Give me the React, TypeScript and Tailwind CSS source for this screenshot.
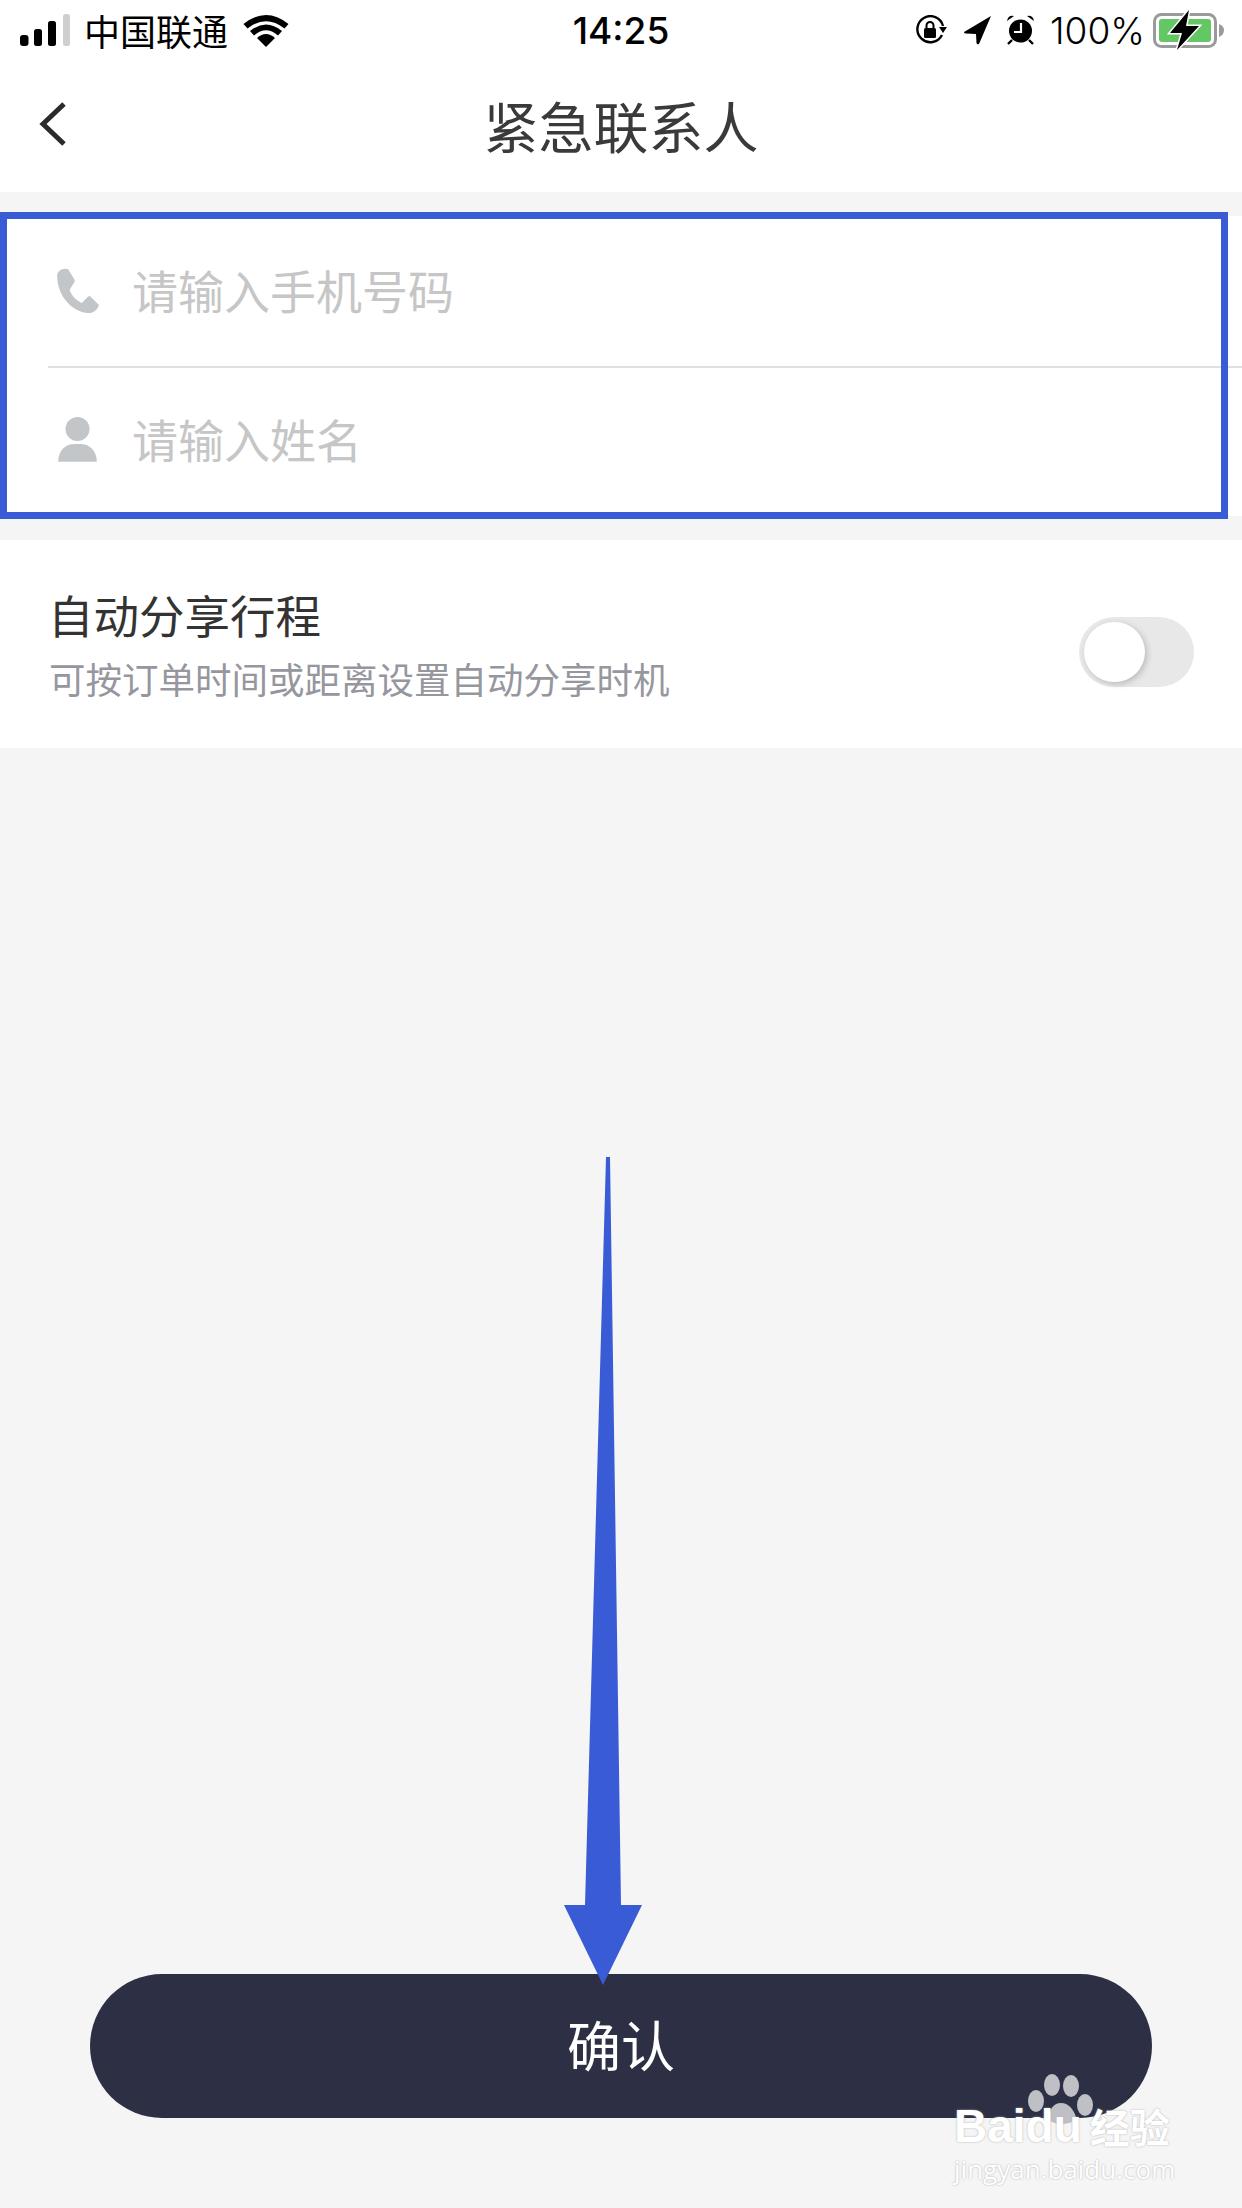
function StatusBar() {
  return (
    <div className="grid h-[60px] grid-cols-3 items-center text-black">
      <div className="flex items-center pl-5">
        <svg width="50" height="32" viewBox="0 0 50 32">
          <rect x="0" y="21" width="8.5" height="11" rx="3" fill="#000" />
          <rect x="14" y="15" width="8" height="17" rx="2.5" fill="#000" />
          <rect x="28" y="7" width="8" height="25" rx="2.5" fill="#000" />
          <rect x="43" y="0" width="7" height="32" rx="2.5" fill="#cfcfcf" />
        </svg>
        <span className="ml-[14px] font-['Noto_Sans_CJK_SC',sans-serif] text-[36px] leading-[44px] whitespace-nowrap">
          中国联通
        </span>
        <svg className="ml-[15px]" width="46" height="33" viewBox="0 0 46 33">
          <path d="M0.5 10 Q23 -8 45.5 10 L41.5 14.5 Q23 0 4.5 14.5 Z" fill="#000" />
          <path d="M7 17 Q23 4 39 17 L35 21.5 Q23 11 11 21.5 Z" fill="#000" />
          <path d="M14 24 Q23 16 32 24 L23 33 Z" fill="#000" />
        </svg>
      </div>

      <div className="pt-[2px] text-center font-['Inter',sans-serif] text-[37px] font-medium leading-[44px]">14:25</div>

      <div className="flex items-center justify-end pr-[16px]">
        <svg width="32" height="30" viewBox="0 0 32 30">
          <path d="M27 20 A13 13 0 1 1 28 11" fill="none" stroke="#000" strokeWidth="2.4" />
          <path d="M24 12 L32 12 L28 18 Z" fill="#000" />
          <rect x="9" y="13" width="12" height="10" rx="1.5" fill="#000" />
          <path d="M11.5 13 V10.5 A3.5 3.5 0 0 1 18.5 10.5 V13" fill="none" stroke="#000" strokeWidth="2" />
        </svg>
        <svg className="ml-[17px]" width="27" height="29" viewBox="0 0 27 29">
          <path d="M27 0 L0 16 Q0 17.5 2 17.5 L12 18 L12.5 27 Q13 29 15 28 Z" fill="#000" />
        </svg>
        <svg className="ml-[15px]" width="29" height="30" viewBox="0 0 29 30">
          <circle cx="14.5" cy="16" r="11.5" fill="#000" />
          <path d="M1 6 Q2 0 8 1 Z M28 6 Q27 0 21 1 Z" fill="#000" />
          <path d="M6 25 L2 29 M23 25 L27 29" stroke="#000" strokeWidth="2.4" />
          <path d="M15 8 V17 H8" fill="none" stroke="#fff" strokeWidth="2.2" />
        </svg>
        <span className="ml-[15px] pt-[2px] font-['Inter',sans-serif] text-[37px] font-light leading-[44px]">100%</span>
        <svg className="ml-[8px]" width="73" height="40" viewBox="0 0 73 40">
          <rect x="1.5" y="4.5" width="61" height="32" rx="7" fill="none" stroke="#9a9a9a" strokeWidth="3" />
          <rect x="6" y="9" width="52" height="23" rx="3" fill="#63c764" />
          <path d="M66 14 Q71 16 71 20 Q71 25 66 27 Z" fill="#9a9a9a" />
          <path d="M36 0 L17 23 H29 L24 40 L46 16 H33 Z" fill="#000" stroke="#fff" strokeWidth="3" paintOrder="stroke" />
        </svg>
      </div>
    </div>
  );
}

function Header() {
  return (
    <div className="relative flex h-[132px] items-center justify-center">
      <svg className="absolute left-[38px] top-[40px]" width="30" height="48" viewBox="0 0 30 48">
        <path d="M26 4 L5 24 L26 44" fill="none" stroke="#2b2b2b" strokeWidth="5" />
      </svg>
      <h1 className="mb-[5px] font-['Noto_Sans_CJK_SC',sans-serif] text-[55px] font-normal leading-[64px] text-[#3a3a3a]">
        紧急联系人
      </h1>
    </div>
  );
}

function PhoneIcon() {
  return (
    <svg width="43" height="46" viewBox="172 238 128 138">
      <path
        d="M172 262 C172 245 190 236 205 242 L225 275 C226 282 210 298 210 305 C215 322 230 335 245 343 C252 340 262 322 270 322 L297 348 C298 358 280 375 265 373 C215 370 172 320 172 262 Z"
        fill="#c3c6c9"
      />
    </svg>
  );
}

function PersonIcon() {
  return (
    <svg className="ml-[1px]" width="39" height="45" viewBox="176 681 116 135">
      <circle cx="234" cy="717" r="36" fill="#c3c6c9" />
      <path d="M176 815 C176 785 195 762 225 762 L243 762 C272 762 292 785 292 815 Z" fill="#c3c6c9" />
    </svg>
  );
}

function InputRow({ icon, placeholder, rowClass, textClass }: { icon: React.ReactNode; placeholder: string; rowClass: string; textClass?: string }) {
  return (
    <div className={`flex items-center pl-[57px] ${rowClass}`}>
      <div className="w-[75px] shrink-0">{icon}</div>
      <span className={`text-[46px] leading-[56px] text-[#c6c6c6] ${textClass ?? ""}`}>{placeholder}</span>
    </div>
  );
}

function Watermark() {
  return (
    <div className="absolute left-[954px] top-[2074px] w-[230px] text-white">
      <svg className="ml-[74px] block" width="66" height="52" viewBox="0 0 66 52">
        <ellipse cx="8" cy="27" rx="8" ry="11" fill="#bfc0c6" />
        <ellipse cx="24" cy="11" rx="8" ry="11" fill="#bfc0c6" />
        <ellipse cx="43" cy="12" rx="8" ry="11" fill="#bfc0c6" />
        <ellipse cx="57" cy="31" rx="8" ry="11" fill="#bfc0c6" />
        <path d="M20 46 Q22 29 33 29 Q44 29 49 46 Q33 54 20 46 Z" fill="#bfc0c6" />
      </svg>
      <div className="-mt-[19px] flex items-center font-['Liberation_Sans',sans-serif] text-[46px] font-bold leading-[38px] [text-shadow:0_0_2px_#aaaaaa]">
        <span>Baidu</span>
        <span className="ml-[8px] font-['Noto_Sans_CJK_SC',sans-serif] text-[40px] font-bold">经验</span>
      </div>
      <div className="mt-[8px] font-['Open_Sans',sans-serif] text-[26px] leading-[32px] whitespace-nowrap [text-shadow:0_0_2px_#aaaaaa]">
        jingyan.baidu.com
      </div>
    </div>
  );
}

export default function App() {
  return (
    <div className="relative flex h-[2208px] w-[1242px] flex-col overflow-hidden bg-[#f5f5f5] font-['Noto_Sans_CJK_SC',sans-serif]">
      <div className="bg-white">
        <StatusBar />
        <Header />
      </div>

      <div className="relative mt-6 bg-white">
        <InputRow icon={<PhoneIcon />} placeholder="请输入手机号码" rowClass="h-[150px]" textClass="mb-[4px]" />
        <div className="ml-[48px] h-[2px] bg-[#e0e0e0]" />
        <InputRow icon={<PersonIcon />} placeholder="请输入姓名" rowClass="h-[148px] pb-[5px]" textClass="mb-[4px]" />
        {/* annotation frame */}
        <div className="absolute -top-[4px] -bottom-[3px] left-0 right-[14px] border-[7px] border-[#3a5bd6]" />
      </div>

      <div className="mt-6 flex h-[208px] items-center justify-between bg-white pl-[48px] pr-[48px]">
        <div>
          <div className="-mt-[3px] text-[45.5px] leading-[60px] text-[#333]">自动分享行程</div>
          <div className="mt-[12px] pl-[1px] text-[36.5px] leading-[46px] text-[#96979e]">可按订单时间或距离设置自动分享时机</div>
        </div>
        <div className="mt-4 flex h-[70px] w-[115px] items-center rounded-full bg-[#e8e8e8] pl-[5px]">
          <div className="h-[60px] w-[61px] rounded-full bg-white shadow-[2px_2px_6px_rgba(0,0,0,0.2)]" />
        </div>
      </div>

      <div className="flex flex-1 items-end justify-center pb-[90px]">
        <button className="flex h-[144px] w-[1062px] items-center justify-center rounded-full bg-[#2d2f44] pb-[5px] text-[54px] text-white">
          确认
        </button>
      </div>

      {/* annotation arrow */}
      <svg className="absolute left-[560px] top-[1155px]" width="90" height="835" viewBox="0 0 90 835">
        <path d="M46 2 H50 L61 750 H82 L43 830 L4 750 H25 Z" fill="#3a5bd6" />
      </svg>

      <Watermark />
    </div>
  );
}
